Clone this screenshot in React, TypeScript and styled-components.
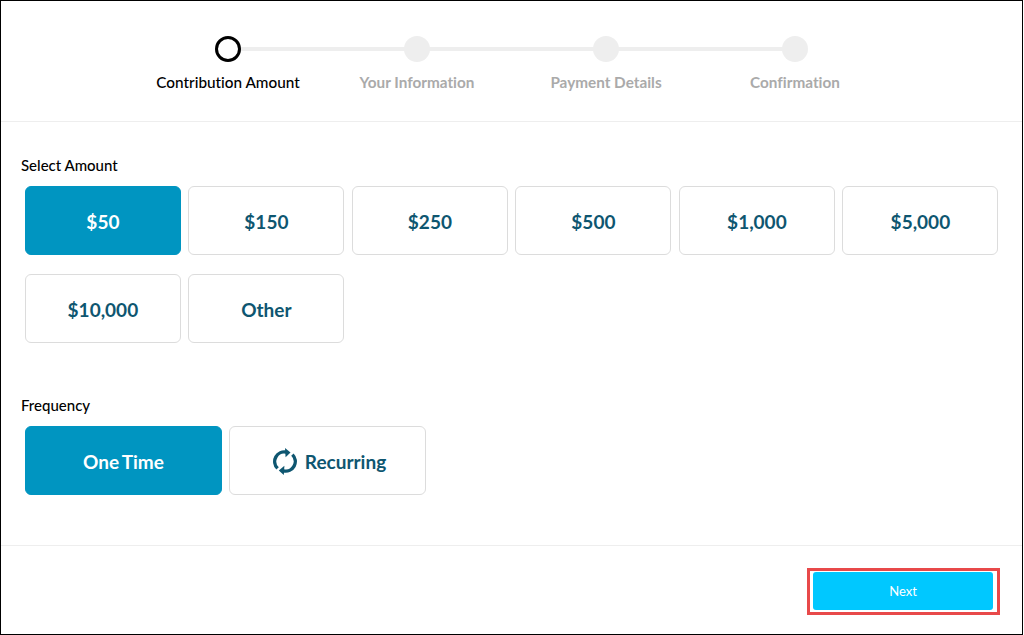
import React from "react";
import styled, { createGlobalStyle } from "styled-components";

const Global = createGlobalStyle`
  html, body { margin: 0; padding: 0; background: #fff; }
  body { font-family: Lato, "Open Sans", sans-serif; font-variant-ligatures: none; }
`;

const Frame = styled.div`
  box-sizing: border-box;
  width: 1023px;
  height: 635px;
  border: 1px solid #000;
  display: flex;
  flex-direction: column;
  overflow: hidden;
`;

const Header = styled.header`
  box-sizing: border-box;
  height: 121px;
  flex: none;
  border-bottom: 1px solid #eeeeee;
  display: flex;
  justify-content: center;
  padding-top: 35px;
`;

const Stepper = styled.ol`
  list-style: none;
  margin: 0;
  padding: 0;
  display: grid;
  grid-template-columns: repeat(4, 189px);
`;

const Step = styled.li<{ $last?: boolean }>`
  position: relative;
  display: flex;
  flex-direction: column;
  align-items: center;
  &::before {
    content: "";
    position: absolute;
    top: 11px;
    height: 4px;
    left: 50%;
    width: 100%;
    background: #eeeeee;
    display: ${(p) => (p.$last ? "none" : "block")};
  }
`;

const Dot = styled.span<{ $active?: boolean }>`
  position: relative;
  box-sizing: border-box;
  width: 26px;
  height: 26px;
  border-radius: 50%;
  background: ${(p) => (p.$active ? "#fff" : "#eeeeee")};
  border: ${(p) => (p.$active ? "3px solid #000" : "none")};
`;

const StepLabel = styled.span<{ $active?: boolean }>`
  margin-top: 11px;
  font-size: 15.3px;
  line-height: 19px;
  font-weight: ${(p) => (p.$active ? 500 : 700)};
  color: ${(p) => (p.$active ? "#000" : "#aaaaaa")};
  white-space: nowrap;
`;

const Main = styled.main`
  box-sizing: border-box;
  height: 424px;
  flex: none;
  border-bottom: 1px solid #eeeeee;
  padding: 34px 20px 0 20px;
`;

const FieldLabel = styled.div`
  font-size: 15px;
  line-height: 19px;
  font-weight: 500;
  color: #000;
  margin-bottom: 11px;
`;

const AmountGrid = styled.div`
  display: grid;
  grid-template-columns: repeat(6, 156px);
  column-gap: 7.5px;
  row-gap: 19px;
  padding-left: 3.9px;
  margin-bottom: 53px;
`;

const FrequencyRow = styled.div`
  display: flex;
  gap: 7px;
  padding-left: 4px;
`;

const Choice = styled.button<{ $selected?: boolean; $wide?: boolean }>`
  box-sizing: border-box;
  width: ${(p) => (p.$wide ? "197px" : "156px")};
  height: 69px;
  border-radius: 6px;
  border: 1px solid ${(p) => (p.$selected ? "#0095c1" : "#dcdcdc")};
  background: ${(p) => (p.$selected ? "#0095c1" : "#fff")};
  color: ${(p) => (p.$selected ? "#fff" : "#0e5670")};
  font-family: inherit;
  font-variant-ligatures: none;
  font-size: 19px;
  font-weight: 700;
  word-spacing: -1.5px;
  padding: 2px 0 0;
  display: flex;
  align-items: center;
  justify-content: center;
  gap: 8px;
`;

const RecurringIcon = styled.svg`
  width: 24px;
  height: 27px;
  flex: none;
  margin: -1px 0 0 4px;
  fill: none;
  stroke: currentColor;
`;

const Footer = styled.footer`
  flex: 1;
  display: flex;
  justify-content: flex-end;
  align-items: flex-start;
  padding: 22px 22px 0 0;
`;

const NextHighlight = styled.div`
  box-sizing: border-box;
  width: 193px;
  height: 47px;
  border: 3px solid #e8494a;
  padding: 1px 4px 2px 3px;
`;

const NextButton = styled.button`
  box-sizing: border-box;
  display: block;
  width: 180px;
  height: 38px;
  border: none;
  border-radius: 3px;
  background: #00c8ff;
  color: #fff;
  font-family: inherit;
  font-size: 13px;
  font-weight: 400;
  padding: 0;
`;

const steps = ["Contribution Amount", "Your Information", "Payment Details", "Confirmation"];
const amounts = ["$50", "$150", "$250", "$500", "$1,000", "$5,000", "$10,000", "Other"];

export default function App() {
  return (
    <Frame>
      <Global />
      <Header>
        <Stepper>
          {steps.map((s, i) => (
            <Step key={s} $last={i === steps.length - 1}>
              <Dot $active={i === 0} />
              <StepLabel $active={i === 0}>{s}</StepLabel>
            </Step>
          ))}
        </Stepper>
      </Header>
      <Main>
        <FieldLabel>Select Amount</FieldLabel>
        <AmountGrid>
          {amounts.map((a, i) => (
            <Choice key={a} $selected={i === 0}>{a}</Choice>
          ))}
        </AmountGrid>
        <FieldLabel>Frequency</FieldLabel>
        <FrequencyRow>
          <Choice $wide $selected>One Time</Choice>
          <Choice $wide>
            <RecurringIcon viewBox="0 0 24 27">
              <path d="M4.6 20.4A9.6 9.6 0 0 1 13.5 4.2" strokeWidth="3.4" />
              <path d="M19.4 6.6A9.6 9.6 0 0 1 10.5 22.8" strokeWidth="3.4" />
              <path d="M12 0L17.5 4.6L12.6 9.2Z" fill="currentColor" stroke="none" />
              <path d="M11.4 17.8L5.8 22.4L10.8 27Z" fill="currentColor" stroke="none" />
            </RecurringIcon>
            Recurring
          </Choice>
        </FrequencyRow>
      </Main>
      <Footer>
        <NextHighlight>
          <NextButton>Next</NextButton>
        </NextHighlight>
      </Footer>
    </Frame>
  );
}
